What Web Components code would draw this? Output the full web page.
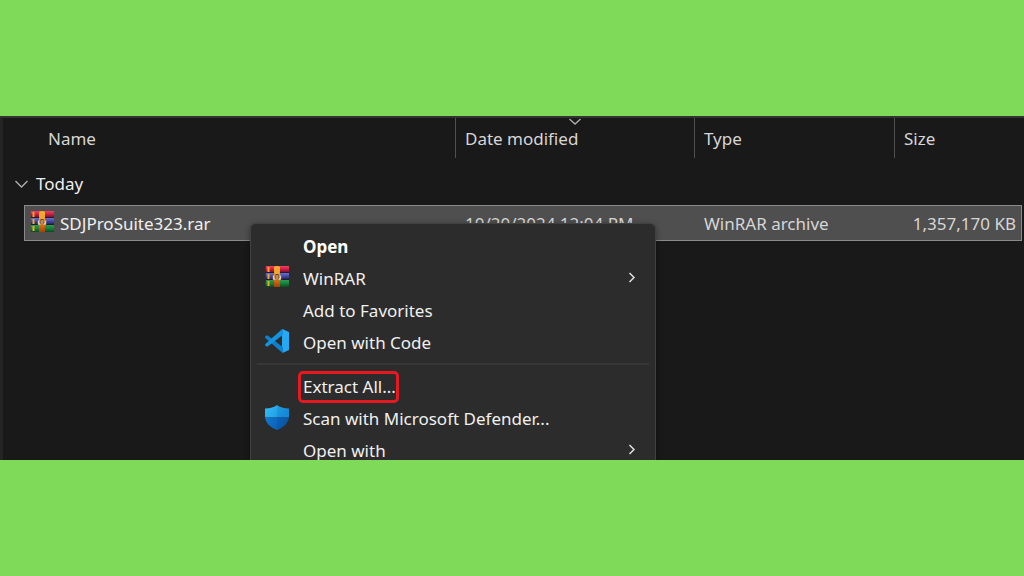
<!DOCTYPE html>
<html lang="en">
<head>
<meta charset="utf-8">
<meta name="viewport" content="width=device-width, initial-scale=1">
<title>File Explorer</title>
<style>
  body { margin: 0; background: #7eda58; font-family: "Noto Sans", "Open Sans", sans-serif; font-size: 17px; line-height: 24px; }
</style>
</head>
<body>
<page-banner>
  <file-explorer>
    <file-list></file-list>
    <context-menu slot="menu">
      <menu-entry strong>Open</menu-entry>
      <menu-entry submenu><app-icon slot="icon" name="winrar"></app-icon>WinRAR</menu-entry>
      <menu-entry>Add to Favorites</menu-entry>
      <menu-entry><app-icon slot="icon" name="code"></app-icon>Open with Code</menu-entry>
      <menu-divider></menu-divider>
      <menu-entry marked>Extract All...</menu-entry>
      <menu-entry><app-icon slot="icon" name="defender"></app-icon>Scan with Microsoft Defender...</menu-entry>
      <menu-entry submenu>Open with</menu-entry>
    </context-menu>
  </file-explorer>
</page-banner>
<script>
const define = (name, html, setup) => {
  const template = document.createElement('template');
  template.innerHTML = html;
  customElements.define(name, class extends HTMLElement {
    constructor() {
      super();
      this.attachShadow({ mode: 'open' }).append(template.content.cloneNode(true));
    }
    connectedCallback() { if (setup) setup(this, this.shadowRoot); }
  });
};

const icons = {
  winrar: `<svg viewBox="0 0 24 22" width="24" height="22">
    <defs>
      <linearGradient id="r" x2="0" y2="1"><stop stop-color="#ee4260"/><stop offset=".5" stop-color="#d41f45"/><stop offset="1" stop-color="#7d1230"/></linearGradient>
      <linearGradient id="b" x2="0" y2="1"><stop stop-color="#6d70c8"/><stop offset=".5" stop-color="#474caa"/><stop offset="1" stop-color="#25285f"/></linearGradient>
      <linearGradient id="g" x2="0" y2="1"><stop stop-color="#2f9c4c"/><stop offset=".5" stop-color="#16803a"/><stop offset="1" stop-color="#0a4a20"/></linearGradient>
      <linearGradient id="o" x2="0" y2="1"><stop stop-color="#f6b530"/><stop offset=".5" stop-color="#e88a1c"/><stop offset="1" stop-color="#a93d0c"/></linearGradient>
    </defs>
    <rect x="1" width="23" height="21" fill="#261a2b"/>
    <path d="M1 0H24V6H1Q0 3 1 0Z" fill="url(#r)"/>
    <path d="M1 7H24V13H1Q0 10 1 7Z" fill="url(#b)"/>
    <path d="M1 14H24V21H1Q0 18 1 14Z" fill="url(#g)"/>
    <path d="M2.500 1H4.500V6H2.500ZM2.500 8H4.500V13H2.500ZM2.500 15H4.500V20H2.500Z" fill="#f3a71d"/>
    <path d="M9 1Q12 -1 15 1V21H9Z" fill="url(#o)"/>
    <path d="M10 3Q12 1 14 3V8H10Z" fill="#f0a82c"/>
    <path d="M8.500 9.500V13H10.500M15.500 9.500V13H13.500" fill="none" stroke="#d9d2cc" stroke-width="1.300"/>
    <path d="M12 8V13" stroke="#6b3c1c" stroke-width="3"/><path d="M12 9V13" stroke="#eee1c8" stroke-width="1"/>
  </svg>`,
  code: `<svg viewBox="0 0 24 24" width="24" height="24">
    <path d="M17.500 0 24 3V21L17.500 24 17 18V6Z" fill="#26a8f4"/>
    <path d="M1.400 6.500 2.700 6.600 18 18.200V23.500L17 23.500 .3 9Q-.2 8 .3 7.500Z" fill="#1180cc"/>
    <path d="M1.400 17.500 2.700 17.400 18 5.800V.3L17 .3 .3 15Q-.2 16 .3 16.500Z" fill="#1493de"/>
  </svg>`,
  defender: `<svg viewBox="0 0 24 25" width="24" height="25">
    <defs>
      <clipPath id="s"><path d="M12 0Q16 3.300 24 3.500V11C24 18 18.500 22.500 12 25 5.500 22.500 0 18 0 11V3.500Q8 3.300 12 0Z"/></clipPath>
      <linearGradient id="t" x2="1" y2=".3"><stop stop-color="#36bdf3"/><stop offset="1" stop-color="#1795e3"/></linearGradient>
      <linearGradient id="u" x2="1" y2=".3"><stop stop-color="#0d7ad2"/><stop offset="1" stop-color="#0a57a8"/></linearGradient>
    </defs>
    <g clip-path="url(#s)">
      <path d="M0 0H24V12.500H0Z" fill="url(#t)"/>
      <path d="M0 12.500H24V25H0Z" fill="url(#u)"/>
      <path d="M12 0H24V25H12Z" fill="#003c8c" opacity=".12"/>
    </g>
  </svg>`
};

define('app-icon', `<style>
  :host { display: block; flex: none; }
  svg { display: block; }
</style><span></span>`, (el, root) => {
  root.querySelector('span').innerHTML = icons[el.getAttribute('name')];
});

define('page-banner', `<style>
  :host { display: flex; flex-direction: column; justify-content: center; min-height: 100vh; background: #7eda58; }
</style><slot></slot>`);

define('file-explorer', `<style>
  :host { display: block; position: relative; height: 342px; overflow: hidden; background: #191919; border-top: 2px solid #333333; }
  ::slotted(context-menu) { position: absolute; top: 105px; left: 250px; }
</style><slot></slot><slot name="menu"></slot>`);

define('file-list', `<style>
  :host { display: block; color: #d6d6d6; border-left: 3px solid #242424; padding-right: 2px; min-height: 342px; box-sizing: border-box; }
  table { width: 100%; table-layout: fixed; border-collapse: separate; border-spacing: 0; }
  th, td { padding: 0; font-weight: 400; text-align: left; white-space: nowrap; box-sizing: border-box; }
  button { all: unset; box-sizing: border-box; }
  .gutter { width: 21px; }
  .date { width: 239px; }
  .type { width: 200px; }
  .size { width: 128px; }
  thead th { position: relative; height: 40px; padding: 2px 0 0 9px; }
  thead th + th { border-left: 1px solid #505050; }
  thead th:first-child { padding-left: 45px; }
  .sort { position: absolute; top: 0; left: 50%; transform: translateX(-50%); }
  .group { height: 47px; padding: 5px 0 0 12px; color: #ededed; }
  .group button { display: flex; align-items: center; gap: 8px; }
  .file .cell { height: 36px; padding: 2px 0 0 10px; background: #4f4f4f; border: solid #8a8a8a; border-width: 1px 0; }
  .file .name { border-left-width: 1px; padding-left: 5px; color: #f0f0f0; }
  .name div { display: flex; align-items: center; gap: 6px; }
  .name app-icon { margin-bottom: 4px; }
  .file .amount { border-right-width: 1px; text-align: right; padding-left: 0; padding-right: 5px; }
  svg { display: block; fill: none; stroke: #b0b0b0; stroke-width: 1.300; }
</style>
<table>
  <colgroup><col class="gutter"><col><col class="date"><col class="type"><col class="size"></colgroup>
  <thead><tr>
    <th colspan="2" scope="col"><button>Name</button></th>
    <th scope="col" aria-sort="descending"><button>Date modified</button><svg class="sort" width="13" height="7"><path d="M1 1 6.500 6 12 1"/></svg></th>
    <th scope="col"><button>Type</button></th>
    <th scope="col"><button>Size</button></th>
  </tr></thead>
  <tbody>
    <tr><td class="group" colspan="5"><button aria-expanded="true"><svg width="13" height="8"><path d="M.5 1 6.500 7 12.500 1"/></svg>Today</button></td></tr>
    <tr class="file">
      <td></td>
      <td class="cell name"><div><app-icon name="winrar"></app-icon>SDJProSuite323.rar</div></td>
      <td class="cell">10/20/2024 12:04 PM</td>
      <td class="cell">WinRAR archive</td>
      <td class="cell amount">1,357,170 KB</td>
    </tr>
  </tbody>
</table>`);

define('context-menu', `<style>
  :host { display: block; box-sizing: border-box; width: 406px; padding: 7px 6px; color: #f0f0f0; background: #2c2c2c; border: 1px solid #414141; border-radius: 6px; box-shadow: 0 2px 6px #00000060; }
</style><div role="menu"><slot></slot></div>`);

define('menu-divider', `<style>
  :host { display: block; height: 2px; margin: 4px 0 6px; background: #363636; }
</style>`);

define('menu-entry', `<style>
  :host { display: block; }
  button { all: unset; box-sizing: border-box; display: grid; grid-template-columns: 24px 1fr 8px; column-gap: 9px; align-items: center; width: 100%; height: 32px; padding: 0 13px 0 8px; }
  .icon { margin-bottom: 4px; }
  .label { justify-self: start; box-sizing: border-box; height: 32px; padding: 2px 5px; border: 0 solid #e5191f; white-space: nowrap; line-height: 28px; }
  :host([strong]) .label { font-weight: 700; color: #fff; }
  :host([marked]) .label { padding: 0 0 0 2px; border-width: 3px; border-radius: 5px; line-height: 26px; }
  svg { display: none; fill: none; stroke: #e0e0e0; stroke-width: 1.500; margin-bottom: 4px; }
  :host([submenu]) svg { display: block; }
</style>
<button role="menuitem"><span class="icon"><slot name="icon"></slot></span><span class="label"><slot></slot></span><svg width="8" height="11"><path d="M1.500 1 6 5.500 1.500 10"/></svg></button>`);
</script>
</body>
</html>
